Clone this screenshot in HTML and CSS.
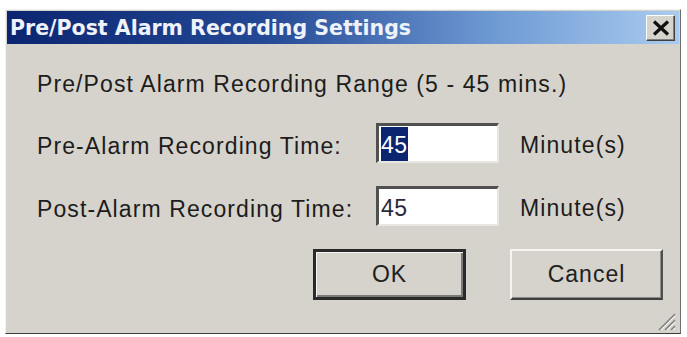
FILE: index.html
```html
<!DOCTYPE html>
<html lang="en">
<head>
  <meta charset="UTF-8" />
  <title>Pre/Post Alarm Recording Settings</title>
  <link rel="stylesheet" href="styles.css">
</head>
<body>

  <div class="dialog">
    <!-- Title bar -->
    <div class="titlebar">
      <span class="title">Pre/Post Alarm Recording Settings</span>
      <button class="close" aria-label="Close">
        <svg width="20" height="16" viewBox="0 0 20 16">
          <path d="M3 1.5 L17 14.5 M17 1.5 L3 14.5" stroke="#111" stroke-width="3.2" fill="none"/>
        </svg>
      </button>
    </div>

    <div class="content">
      <p class="range">Pre/Post Alarm Recording Range (5 - 45 mins.)</p>

      <div class="row">
        <label class="label">Pre-Alarm Recording Time:</label>
        <div class="field"><span class="selected">45</span></div>
        <span class="unit">Minute(s)</span>
      </div>

      <div class="row">
        <label class="label">Post-Alarm Recording Time:</label>
        <div class="field"><span>45</span></div>
        <span class="unit">Minute(s)</span>
      </div>

      <div class="actions">
        <button class="btn btn-default">OK</button>
        <button class="btn">Cancel</button>
      </div>
    </div>

    <!-- size grip -->
    <svg class="grip" width="22" height="22" viewBox="0 0 22 22">
      <path d="M21 5 L5 21 M21 11 L11 21 M21 17 L17 21" stroke="#808080" stroke-width="1.5"/>
      <path d="M21 7 L7 21 M21 13 L13 21 M21 19 L19 21" stroke="#fff" stroke-width="1"/>
    </svg>
  </div>

</body>
</html>
```

FILE: styles.css
```css
* {
  box-sizing: border-box;
  margin: 0;
  padding: 0;
}

body {
  background: #ffffff;
  font-family: "Liberation Sans", Arial, sans-serif;
}

.dialog {
  position: relative;
  width: 676px;
  height: 325px;
  margin: 9px 0 0 5px;
  background: #d6d3cc;
  border: 1px solid;
  border-color: #f2f1ed #6e6e6e #3c3c3c #f2f1ed;
  padding: 1px;
}

.titlebar {
  display: flex;
  align-items: center;
  justify-content: space-between;
  height: 33px;
  padding: 0 4px 0 3px;
  background: linear-gradient(to right, #0b2570 0%, #244894 38%, #6d99d3 72%, #a9cbee 100%);
}

.title {
  font-family: "DejaVu Sans", Tahoma, sans-serif;
  font-weight: bold;
  font-size: 20.5px;
  color: #eef2fb;
}

.close {
  flex-shrink: 0;
  width: 29px;
  height: 26px;
  padding: 0;
  display: flex;
  align-items: center;
  justify-content: center;
  background: #d6d3cc;
  border: 1px solid;
  border-color: #ffffff #404040 #404040 #ffffff;
  box-shadow: inset -1px -1px 0 #808080;
}

.close svg {
  flex-shrink: 0;
}

.content {
  padding: 27px 16px 0 30px;
  color: #1c1c1c;
  font-size: 23px;
  letter-spacing: 1.1px;
}

.range {
  line-height: 26px;
  margin-bottom: 26px;
}

.row {
  display: flex;
  align-items: center;
  margin-bottom: 23px;
}

.row:last-of-type {
  margin-bottom: 41px;
}

.label {
  width: 339px;
  padding-top: 6px;
}

.field {
  width: 123px;
  height: 40px;
  padding: 1px 0 0 2px;
  background: #ffffff;
  border-top: 3px solid #505050;
  border-left: 3px solid #505050;
  border-right: 2px solid #e8e6e1;
  border-bottom: 2px solid #e8e6e1;
  color: #2a2a3a;
  letter-spacing: 0.5px;
}

.field span {
  display: inline-block;
  line-height: 32px;
  padding-top: 2px;
}

.selected {
  background: #0b2570;
  color: #ffffff;
}

.unit {
  margin-left: 21px;
  padding-top: 4px;
}

.actions {
  display: flex;
  justify-content: flex-end;
  gap: 44px;
}

.btn {
  width: 153px;
  height: 51px;
  background: #d6d3cc;
  font-family: "Liberation Sans", Arial, sans-serif;
  font-size: 23px;
  letter-spacing: 1px;
  color: #202020;
  border: 2px solid;
  border-color: #f6f5f2 #505050 #404040 #f6f5f2;
  box-shadow: inset -1px -1px 0 #8a8a8a;
}

.btn-default {
  border: 3px solid #2a2a2a;
  box-shadow: inset 1px 1px 0 #f6f5f2, inset -2px -2px 0 #7a7a7a;
}

.grip {
  position: absolute;
  right: 4px;
  bottom: 2px;
}
```
